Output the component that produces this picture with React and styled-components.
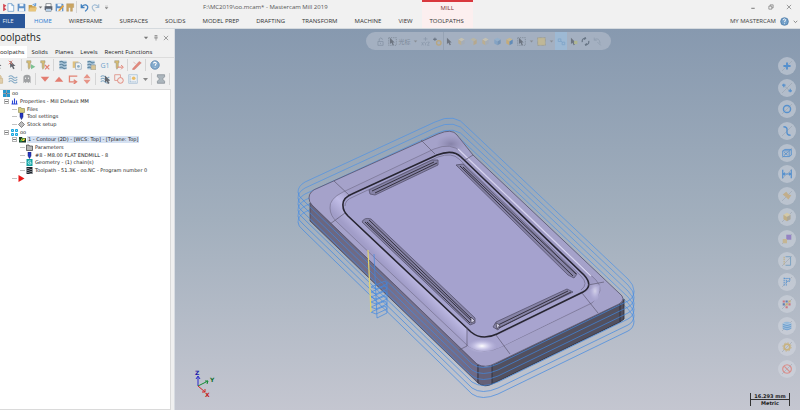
import React from 'react';
import styled, { createGlobalStyle, css } from 'styled-components';

const GlobalStyle = createGlobalStyle`
    * {
        box-sizing: border-box;
    }

    body {
        margin: 0;
        font-family: 'Open Sans', 'Noto Sans', sans-serif;
        font-size: 6px;
        color: #444;
        background: #f0f0f0;
    }

    button, a {
        font: inherit;
        color: inherit;
        text-decoration: none;
    }

    button {
        padding: 0;
        border: 0;
        background: none;
    }

    svg {
        display: block;
        flex-shrink: 0;
    }
`;

const Page = styled.div`
    min-height: 100vh;
    display: flex;
    flex-direction: column;
    overflow: hidden;
`;

const Header = styled.header`
    display: flex;
    background: #f1f1f1;
    border-bottom: 1px solid #d5dade;
`;

const HeaderColumn = styled.div`
    display: flex;
    flex-direction: column;
    flex-grow: ${props => props.grow ? 1 : 0};
`;

const HeaderRow = styled.div`
    display: flex;
    align-items: center;
    height: 14px;
    line-height: 14px;
    justify-content: ${props => props.end ? 'flex-end' : 'flex-start'};
    gap: ${props => props.gap || 0}px;
    padding-right: ${props => props.end ? 2 : 0}px;
`;

const QuickButton = styled.button`
    width: ${props => props.narrow ? 4 : 10}px;
    height: 12px;
    display: flex;
    align-items: center;
    justify-content: center;
`;

const Title = styled.h1`
    margin: 0 94px 0 auto;
    font-size: 6px;
    font-weight: 400;
    color: #555;
`;

const RibbonTab = styled.button`
    height: 14px;
    padding: 0 9px 0 8px;
    white-space: nowrap;
    color: ${props => props.active ? '#2b7cd3' : '#333'};
`;

const FileTab = styled.button`
    width: 25px;
    height: 14px;
    margin-right: 1px;
    padding-right: 9px;
    background: #2a579a;
    color: #e6ecf6;
`;

const Context = styled.div`
    display: flex;
    flex-direction: column;
    align-items: center;
    line-height: 12px;
    border-top: 2px solid #d9383e;
    background: #fcefef;
    color: #7b3434;
`;

const WindowButton = styled.button`
    width: 18px;
    height: 12px;
    display: flex;
    align-items: center;
    justify-content: center;
`;

const Main = styled.main`
    display: flex;
    flex: 1;
`;

const Panel = styled.aside`
    flex: 0 0 175px;
    display: flex;
    flex-direction: column;
    overflow: hidden;
    background: #f0f0f0;
    border-right: 1px solid #d8dce2;
`;

const PanelHeader = styled.div`
    display: flex;
    align-items: center;
    height: 17px;
    padding-right: 3px;

    h2 {
        flex: 1;
        margin: 0;
        font-size: 10px;
        font-weight: 400;
        line-height: 17px;
        color: #222;
    }
`;

const PanelButton = styled.button`
    width: 10px;
    height: 12px;
    display: flex;
    align-items: center;
    justify-content: center;
`;

const PanelTabs = styled.div`
    display: flex;
    height: 12px;
    border-bottom: 1px solid #dcdcdc;
`;

const PanelTab = styled.button`
    height: 12px;
    padding: 0 3px 0 4px;
    white-space: nowrap;
    color: #222;

    ${props => props.active && css`
        padding-left: 0;
        background: #fff;
    `}
`;

const ToolRow = styled.div`
    display: flex;
    align-items: center;
    gap: 2px;
    height: 14px;
    margin-left: -7px;
`;

const ToolButton = styled.button`
    flex: 0 0 ${props => props.narrow ? 8 : 12}px;
    height: 12px;
    display: flex;
    align-items: center;
    justify-content: center;
    font-size: 7px;
    color: #6da0cb;

    svg {
        opacity: .85;
    }
`;

const Divider = styled.span`
    flex: 0 0 2px;
    height: 12px;
    border-left: 1px solid #d5d5d5;
`;

const TreeBox = styled.div`
    flex: 1;
    margin: 3px 3px 0 0;
    border: 1px solid #dadada;
    border-left: 0;
    background: #fff;
`;

const Tree = styled.ul`
    display: grid;
    grid-template-rows: repeat(12, 1fr);
    height: 92px;
    margin: 0;
    padding: 0;
    list-style: none;
    font-family: 'DejaVu Sans', sans-serif;
    font-size: 5px;
    color: #222;
`;

const Node = styled.li`
    display: flex;
    align-items: center;
    gap: 1px;
    padding-left: ${props => props.level ? props.level * 8 - 4 : 3}px;
    white-space: nowrap;
`;

const Branch = styled.span`
    width: 5px;
    height: 5px;
    margin-right: ${props => props.leaf ? 0 : 1}px;
    display: flex;
    align-items: center;
    justify-content: center;
    border: ${props => props.leaf ? 0 : '1px solid #b5b5b5'};

    &::after {
        content: '';
        width: ${props => props.leaf ? 5 : 3}px;
        height: 1px;
        background: ${props => props.leaf ? '#c2c2c2' : '#777'};
    }
`;

const NodeLabel = styled.span`
    padding: 0 1px;
    line-height: 7px;
    background: ${props => props.selected ? '#d5e1f2' : 'transparent'};
`;

const Viewport = styled.section`
    position: relative;
    flex: 1;
    min-width: 0;
    background: linear-gradient(#8799af, #a2afbd 50%, #c4c6d0);
`;

const Scene = styled.svg`
    width: 100%;
    height: auto;
`;

const SelectionBar = styled.div`
    position: absolute;
    top: 3px;
    left: 191px;
    display: flex;
    align-items: center;
    height: 18px;
    padding: 0 8px;
    border-radius: 9px;
    background: #a4b0c1;
`;

const SelectionButton = styled.button`
    width: ${props => props.width || 12}px;
    height: 18px;
    display: flex;
    align-items: center;
    justify-content: center;
    font: 6px 'Open Sans', 'Noto Sans CJK SC', sans-serif;
    color: #7d8999;
    background: ${props => props.active ? '#9db9d4' : 'transparent'};
    border-left: ${props => props.divided ? '1px solid #96a3b4' : '0'};

    svg {
        opacity: .6;
    }
`;

const QuickMasks = styled.div`
    position: absolute;
    top: 28px;
    right: 4px;
    bottom: 32px;
    display: flex;
    flex-direction: column;
    justify-content: space-between;
`;

const MaskButton = styled.button`
    width: 18px;
    height: 18px;
    display: flex;
    align-items: center;
    justify-content: center;
    border-radius: 50%;
    background: rgba(214, 218, 226, .5);

    svg {
        opacity: .8;
    }
`;

const Scale = styled.div`
    position: absolute;
    right: 10px;
    bottom: 4px;
    width: 40px;
    font: bold 5px 'DejaVu Sans', sans-serif;
    line-height: 6px;
    text-align: center;
    color: #222;
    border: solid #333;
    border-width: 0 1px;

    div:first-child {
        border-bottom: 1px solid #333;
    }
`;

const BLUE = '#3f86cf';
const RED = '#e0705f';

const cursor = <path d='M3 1v10l2.5-2 1.7 4 2-1-1.8-3.6h3z' fill='#4a4f57' />;
const cube = (top, left, right) => <>
    <path d='M2 4l5-3 5 3-5 3z' fill={top} />
    <path d='M2 4v6l5 3V7z' fill={left} />
    <path d='M12 4v6l-5 3V7z' fill={right} />
</>;
const waves = <path d='M1 4q3-3 6 0t6 0M1 7.5q3-3 6 0t6 0M1 11q3-3 6 0t6 0' fill='none' stroke='#719dbd' strokeWidth='1.5' />;
const stripes = <>
    <path d='M2 1h10v12H2z' fill='#9cbdd5' />
    <path d='M2 3q3-2 5 0t5 0M2 7q3-2 5 0t5 0M2 11q3-2 5 0t5 0' fill='none' stroke='#477594' strokeWidth='1.6' />
</>;
const tool = <path d='M1 1h6v3H6v6l-2 3-1-3V4H1z' fill='#d5b65e' stroke='#77745f' strokeWidth='.6' />;
const floppy = <>
    <path d='M1 1h11l1 1v11H1z' fill='#5c8fc7' />
    <path d='M4 1h6v4H4zM3 8h8v5H3z' fill='#eef3f8' />
</>;

// every glyph is drawn in a 14 x 14 box
const glyphs = {
    logo: <path d='M8 1l5 3-3 3 3 3-5 3z' fill='#d34a55' />,
    file: <path d='M3 1h6l3 3v9H3zM9 1v3h3' fill='#f7fbff' stroke='#6f9fce' strokeWidth='1.2' />,
    save: floppy,
    folder: <>
        <path d='M1 3h5l1 2h5v8H1z' fill='#c69c4a' />
        <path d='M3 7h11l-2 6H1z' fill='#e9c57a' />
        <path d='M7 3q3-3 5 0M12 0v4H9' fill='none' stroke={BLUE} strokeWidth='1.2' />
    </>,
    print: <>
        <path d='M3 1h8v5H3zM3 9h8v4H3z' fill='#fff' stroke='#5b6168' />
        <path d='M1 5h12v6H1z' fill='#5d6470' />
        <path d='M3 9h8v4H3z' fill='#b9d1e8' />
    </>,
    saveAs: <>{floppy}<path d='M6 10l6-7 2 2-6 7-3 1z' fill='#e5a23d' /></>,
    zip: <path d='M1 1h11v6h-2v6H7V7H4v6H1z' fill='#caa562' stroke='#a78650' strokeWidth='.5' />,
    undo: <path d='M2 2v5h5M2 7q3-5 7-4 5 2 2 7l-3 3' fill='none' stroke='#3f7fbf' strokeWidth='2' />,
    redo: <path d='M12 2v5H7M12 7Q9 2 5 3q-5 2-2 7l3 3' fill='none' stroke='#a3bdd5' strokeWidth='1.8' />,
    caret: <path d='M2 4h10l-5 6z' fill='#777' />,
    chevron: <path d='M2 5l5 5 5-5' fill='none' stroke='#555' strokeWidth='1.8' />,
    customize: <path d='M3 3h8M3 7h8l-4 4z' fill='#777' stroke='#777' />,
    minimize: <path d='M3 10h8' stroke='#555' strokeWidth='1.8' />,
    restore: <path d='M2 5h7v7H2zM5 5V2h7v7H9' fill='none' stroke='#666' strokeWidth='1.4' />,
    close: <path d='M2 2l10 10M12 2L2 12' stroke='#666' strokeWidth='1.4' />,
    pin: <path d='M4 1h6M5 1v6M9 1v6M3 7h8M7 7v6' fill='none' stroke='#666' strokeWidth='1.3' />,
    help: <>
        <circle cx='7' cy='7' r='6' fill='#729fc8' stroke='#3d6f9f' />
        <path d='M5 5q0-2 2-2 3 1 1 3l-1 2M7 10v1' fill='none' stroke='#fff' strokeWidth='1.5' />
    </>,
    cursor,
    cursorX: <>{cursor}<path d='M1 1l5 5M6 1L1 6' stroke={RED} strokeWidth='1.4' /></>,
    toolPlay: <>{tool}<path d='M7 6l6 3.5L7 13z' fill='#68ba83' /></>,
    toolX: <>{tool}<path d='M7 7l6 6M13 7l-6 6' stroke={RED} strokeWidth='1.6' /></>,
    toolArrow: <>{tool}<path d='M5 10h7M10 7l3 3-3 3' fill='none' stroke={RED} strokeWidth='1.4' /></>,
    stripes,
    stripesSave: <>{stripes}<path d='M7 7h7v7H7z' fill='#d4bd84' stroke='#8b98a4' /></>,
    docs: <>
        <path d='M1 2h8v9H1z' fill='#dcb86c' />
        <path d='M5 4h6l2 2v7H5z' fill='#f6f8fa' stroke='#8099ad' />
        <circle cx='9' cy='9' r='2' fill='#79a2bd' />
    </>,
    pen: <path d='M1 12L10 2l3 2-9 9-3 1zM2 3l3 2' fill='#df7668' stroke='#c7665c' strokeWidth='.6' />,
    lock: <path d='M2 6h10v7H2zM4 6V3q3-4 6 0v3' fill='#dec9a1' stroke='#c5ab78' />,
    waves,
    ghost: <>
        <path d='M2 13V5q0-4 5-4t5 4v8l-2-2-1 2-2-2-2 2-1-2z' fill='#919496' />
        <path d='M5 5v2M9 5v2' stroke='#eee' strokeWidth='1.4' />
    </>,
    down: <path d='M1 4h12l-6 7z' fill='#e16a5b' />,
    up: <path d='M1 11h12L7 4z' fill='#e16a5b' />,
    loop: <path d='M13 3H2v8h9M8 8l4 3-4 3' fill='none' stroke={RED} strokeWidth='1.8' />,
    upDown: <path d='M7 0l5 6H2zM7 14l5-6H2z' fill='#e58677' />,
    wavesCursor: <>{waves}<g transform='translate(4 1)'>{cursor}</g></>,
    shapes: <>
        <path d='M1 1h8v8H1z' fill='none' stroke='#de8b7e' strokeWidth='1.3' />
        <circle cx='9' cy='9' r='4' fill='#f5e9e6' stroke='#dd7466' strokeWidth='1.3' />
    </>,
    grid: <>
        <path d='M1 1h12v12H1z' fill='#edf1f5' stroke='#8fb1cf' />
        <path d='M3 3v8M3 11h8' stroke='#7ca5c8' strokeDasharray='2 1' />
        <circle cx='8' cy='6' r='2.5' fill='#e7b34e' />
    </>,
    post: <path d='M2 1h10v3L9 7l3 3v3H2v-3l3-3-3-3z' fill='#a0abb3' stroke='#6e7982' />,
    group: <>
        <path d='M0 0h6v6H0zM8 0h6v6H8zM0 8h6v6H0zM8 8h6v6H8z' fill='#2598cf' />
        <path d='M0 7h14M7 0v14' stroke='#1c3b57' />
    </>,
    groupLight: <path d='M1 1h4v4H1zM9 1h4v4H9zM1 9h4v4H1zM9 9h4v4H9z' fill='#8fe0f7' stroke='#19a6df' strokeWidth='2' />,
    properties: <path d='M3 5v7M7 1v11M11 5v7M1 12h12' stroke='#2946d6' strokeWidth='2.2' />,
    files: <path d='M1 3h5l1 2h6v8H1z' fill='#d3ca7a' stroke='#77733f' />,
    endmill: <path d='M4 0h6v8l-3 5-3-5z' fill='#2436c4' stroke='#141e66' />,
    stock: <path d='M7 1l6 6-6 6-6-6z' fill='#bdbdbd' stroke='#555' strokeWidth='1.3' />,
    contour: <>
        <path d='M0 2h6l1 2h7v9H0z' fill='#173c2a' />
        <path d='M5 5h8l-3 5H3z' fill='#f1cf3c' />
        <path d='M1 7l3 4 5-7' fill='none' stroke='#27b04a' strokeWidth='2' />
    </>,
    parameters: <path d='M1 2h5l1 2h6v9H1z' fill='#b6b6b6' stroke='#333' strokeWidth='1.3' />,
    geometry: <>
        <path d='M1 0h12v14H1z' fill='#16a3a3' />
        <path d='M10 4Q4 2 4 7t6 3V7H7' fill='none' stroke='#d9ffff' strokeWidth='1.4' />
    </>,
    toolpath: <>
        <path d='M1 0h12v14H1z' fill='#20252c' />
        <path d='M1 4q3-3 6 0t6 0M1 8q3-3 6 0t6 0M1 12q3-3 6 0t6 0' fill='none' stroke='#d6dce2' />
    </>,
    insert: <path d='M1 0l12 7-12 7z' fill='#e81717' />,
    unlock: <path d='M3 7h8v6H3zM5 7V3q2-3 5 0v1M7 9v2' fill='none' stroke='#758395' strokeWidth='1.3' />,
    cursorBox: <><path d='M1 1h12v12H1z' fill='none' stroke='#565f6b' strokeDasharray='2 1.5' />{cursor}</>,
    xyz: <path d='M7 0v6M4 3h6M1 8l3 5M4 8l-3 5M5 8l2 2 2-2M7 10v3M10 8h3l-3 5h3' fill='none' stroke='#748397' />,
    star: <>
        <circle cx='9' cy='9' r='3.5' fill='none' stroke='#c8a052' strokeWidth='2' />
        <path d='M3 1v5M0 3.5h6' stroke='#333c48' strokeWidth='1.4' />
    </>,
    cubeTan: cube('#d8cba9', '#c9ad74', '#a7acb1'),
    cubeGray: cube('#c5b991', '#a9b3bd', '#c3a46c'),
    cubeBlue: cube('#8bb0d3', '#6f9bc6', '#5783b0'),
    cubeMixed: cube('#d6ba78', '#dba94a', '#3775b3'),
    pattern: <path d='M1 1h12v12H1z' fill='#d1bd7c' stroke='#776c4b' strokeDasharray='1 1' />,
    chain: <path d='M2 3h4v4H2zM8 8h4v4H8zM6 6l3 3' fill='none' stroke='#6e9ac3' strokeWidth='1.4' />,
    cursorPair: <>{cursor}<path d='M8 6h5v5H8z' fill='#b8bd70' /></>,
    rotate: <path d='M2 8Q1 2 7 2l-1-2M7 2L5 4M12 6q1 6-5 6l1 2M7 12l2-2' fill='none' stroke='#3e4d5c' strokeWidth='1.8' />,
    arc: <path d='M2 4q8-4 9 6M2 1v4h4M7 8l5 5' fill='none' stroke='#8797a9' strokeWidth='1.5' />,
    plus: <path d='M7 2v10M2 7h10' stroke={BLUE} strokeWidth='2.6' />,
    line: <>
        <path d='M2 3l10 9' stroke='#9aa8b5' strokeWidth='1.4' />
        <path d='M0 3h5M2.5 1v5M9 11h5M11.5 8v5' stroke={BLUE} strokeWidth='1.7' />
    </>,
    circle: <circle cx='7' cy='7' r='5' fill='none' stroke={BLUE} strokeWidth='2' />,
    spline: <path d='M2 1q6 0 5 6t5 6' fill='none' stroke={BLUE} strokeWidth='2' />,
    wire: <path d='M1 4h9v8H1zM1 4l3-2h9l-3 2M13 2v8l-3 2M3 6l5 4M8 6l-5 4' fill='none' stroke={BLUE} strokeWidth='1.3' />,
    dimension: <path d='M1 1v12M13 1v12M2 7h10M4 5L2 7l2 2M10 5l2 2-2 2' fill='none' stroke={BLUE} strokeWidth='1.7' />,
    surface: <path d='M1 5l5-4 3 4 4 1-4 6-4-4z' fill='#c4aa7b' />,
    solid: cube('#dacb9e', '#c2aa74', '#aaa08a'),
    planes: <><path d='M6 1h7v7H6z' fill='#8a73c0' /><path d='M1 7h6v6H1z' fill='#c7b386' /></>,
    bracket: <>
        <path d='M5 1h7v12H5' fill='none' stroke='#6d9abf' strokeWidth='1.4' />
        <path d='M3 1v12' stroke='#c2aa74' strokeWidth='1.6' strokeDasharray='2 1' />
    </>,
    level: <path d='M3 1v12M3 2h8v4H6M6 4v8' fill='none' stroke={BLUE} strokeWidth='1.4' strokeDasharray='2 1' />,
    colors: <>
        <path d='M1 2h3v3H1zM9 6h3v3H9zM5 10h3v3H5z' fill='#d0626f' />
        <path d='M5 2h3v3H5zM1 6h3v3H1z' fill='#4e6aa5' />
        <path d='M9 2h3v3H9zM5 6h3v3H5z' fill='#c9a75a' />
    </>,
    database: <>
        <path d='M1 3v8q6 4 12 0V3z' fill='#5c98d0' />
        <path d='M1 3q6-4 12 0-6 4-12 0' fill='#8bb6dc' />
        <path d='M1 3q6 4 12 0M1 6q6 4 12 0M1 9q6 4 12 0' fill='none' stroke='#d2deea' strokeWidth='.7' />
    </>,
    gear: <>
        <circle cx='7' cy='7' r='4' fill='none' stroke='#c8ad6e' strokeWidth='2.5' />
        <circle cx='7' cy='7' r='6' fill='none' stroke='#c8ad6e' strokeDasharray='2 2.7' />
    </>,
    forbidden: <path d='M3 3l8 8M7 1a6 6 0 1 0 .1 0z' fill='none' stroke='#df8079' strokeWidth='1.6' />,
};

const Icon = ({ name, size = 9, slash }) => <svg width={size} height={size} viewBox='0 0 14 14' aria-hidden='true'>
    {slash && <path d='M0 14L14 0' stroke='#929da9' strokeWidth='.8' />}
    {glyphs[name]}
</svg>;

const quickAccess = ['logo', 'file', 'save', 'folder', 'caret', 'print', 'saveAs', 'zip', '|', 'undo', 'redo', 'customize'];
const ribbonTabs = ['HOME', 'WIREFRAME', 'SURFACES', 'SOLIDS', 'MODEL PREP', 'DRAFTING', 'TRANSFORM', 'MACHINE', 'VIEW'];
const panelTabs = ['oolpaths', 'Solids', 'Planes', 'Levels', 'Recent Functions'];
const toolRows = [
    ['cursor', 'cursorX', '|', 'toolPlay', 'toolX', '|', 'stripes', 'docs', 'stripesSave', 'G1', 'toolArrow', '|', 'pen', '|', 'help'],
    ['lock', 'waves', 'ghost', '|', 'down', 'up', 'loop', 'upDown', '|', 'wavesCursor', 'shapes', 'grid', 'caret', '|', 'post', '|'],
];
const tree = [
    { level: 0, icon: 'group', label: 'oo' },
    { level: 1, icon: 'properties', label: 'Properties - Mill Default MM' },
    { level: 2, icon: 'files', label: 'Files', leaf: true },
    { level: 2, icon: 'endmill', label: 'Tool settings', leaf: true },
    { level: 2, icon: 'stock', label: 'Stock setup', leaf: true },
    { level: 1, icon: 'groupLight', label: 'oo' },
    { level: 2, icon: 'contour', label: '1 - Contour (2D) - [WCS: Top] - [Tplane: Top]', selected: true },
    { level: 3, icon: 'parameters', label: 'Parameters', leaf: true },
    { level: 3, icon: 'endmill', label: '#8 - M8.00 FLAT ENDMILL - 8', leaf: true },
    { level: 3, icon: 'geometry', label: 'Geometry - (1) chain(s)', leaf: true },
    { level: 3, icon: 'toolpath', label: 'Toolpath - 51.3K - oo.NC - Program number 0', leaf: true },
    { level: 2, icon: 'insert', label: '', leaf: true },
];
const selection = [
    { icon: 'unlock' },
    { icon: 'cursorBox' },
    { text: '光标', width: 13 },
    { icon: 'caret', width: 8 },
    { icon: 'xyz' },
    { icon: 'star' },
    { icon: 'cursor', divided: true },
    { icon: 'cubeTan' },
    { icon: 'cubeGray' },
    { icon: 'cubeTan' },
    { icon: 'cubeBlue' },
    { icon: 'cubeMixed' },
    { icon: 'cursorBox' },
    { icon: 'caret', width: 8 },
    { icon: 'pattern' },
    { icon: 'caret', width: 8 },
    { icon: 'chain', active: true },
    { icon: 'cursorPair' },
    { icon: 'rotate' },
    { icon: 'arc' },
];
const masks = ['plus', 'line', 'circle', 'spline', 'wire', 'dimension', 'surface', 'solid', 'planes', 'bracket', 'level', 'colors', 'database', 'gear', 'forbidden'];

const passes = [0, 6, 12, 18, 24, 30];
const backPass = 'M298 192Q298 186 305 182L435 122Q455 112 467 127L628 279Q634 285 634 291';
const frontPass = 'M298 192Q298 196 303 200L472 364Q482 371 498 364L628 301Q634 298 634 291';
const facePath = 'M309 198Q309 191 318 188L438 134Q452 128 457 135L473 155L619 293Q627 299 619 304L496 363Q485 369 477 364L312 205Q309 202 309 198z';

const Slot = ({ outer, inner }) => <g strokeLinejoin='round'>
    <path d={outer} fill='#8683a7' stroke='#55526c' strokeWidth='.8' />
    <path d={inner} fill='none' stroke='#34313f' />
</g>;

const Model = () => <Scene viewBox='175 29 625 381' role='img' aria-label='Contour toolpath on part'>
    <defs>
        <linearGradient id='side' x1='0' y1='0' x2='1' y2='1'>
            <stop offset='0' stopColor='#68647d' />
            <stop offset='.6' stopColor='#77728f' />
            <stop offset='1' stopColor='#6e6985' />
        </linearGradient>
        <linearGradient id='fillet' gradientUnits='userSpaceOnUse' x1='395' y1='275' x2='414' y2='256'>
            <stop offset='0' stopColor='#a19dc8' />
            <stop offset='.5' stopColor='#c0bce6' />
            <stop offset='1' stopColor='#a09cc5' />
        </linearGradient>
        <radialGradient id='shine'>
            <stop offset='0' stopColor='#fff' />
            <stop offset='.4' stopColor='#dbd8f3' stopOpacity='.8' />
            <stop offset='1' stopColor='#bab7df' stopOpacity='0' />
        </radialGradient>
        <radialGradient id='dusk'>
            <stop offset='0' stopColor='#79759a' stopOpacity='.7' />
            <stop offset='1' stopColor='#8e8ab0' stopOpacity='0' />
        </radialGradient>
    </defs>

    <g fill='none' stroke='#4d92e6' strokeWidth='.7'>
        {passes.map(y => <path key={y} d={backPass} transform={`translate(0 ${y})`} />)}
    </g>

    <path d='M310 203L478 365V383L310 221z' fill='url(#side)' stroke='#494659' strokeWidth='.8' />
    <path d='M478 364L486 367L492 365L492 384Q485 388 478 383z' fill='#646078' />
    <path d='M492 365L621 303L624 299V319L620 322L492 384z' fill='#52505f' />
    <path d='M478 365v18Q485 388 492 384L620 322L624 319V299M492 365v19M620 304v18' fill='none' stroke='#292833' strokeWidth='.8' />
    <path d={facePath} fill='#a5a2ca' stroke='#55526c' strokeWidth='.8' />
    <ellipse cx='451' cy='144' rx='15' ry='9' fill='url(#dusk)' />

    <path
        d='M330 208Q329 199 343 192L434 149Q451 142 461 152L596 280Q606 290 592 303L503 346Q483 356 468 346L338 223Q330 216 330 208z'
        fill='url(#fillet)' stroke='#75718f' strokeWidth='.7'
    />
    <path d='M467 327L485 338L505 332L583 293L600 285L598 299L503 346Q483 356 468 346z' fill='#a8a4cf' />
    <ellipse cx='482' cy='346' rx='15' ry='7' fill='url(#shine)' />
    <ellipse cx='595' cy='291' rx='6' ry='10' fill='url(#shine)' opacity='.5' />
    <path d='M458 149L591 276' stroke='#d6d3f0' strokeWidth='1.4' />

    <path
        d='M343 206Q342 198 352 194L437 155Q453 149 461 157L584 275Q594 286 583 292L497 334Q482 341 471 332L348 216Q343 211 343 206z'
        fill='#a5a2ce' stroke='#272531' strokeWidth='1.6'
    />
    <path d='M345 206Q345 200 353 197L438 157Q452 152 459 159L581 276Q589 284 581 290' fill='none' stroke='#777392' strokeWidth='.8' />

    <Slot outer='M369 190L432 160L438 160L438 165L375 195L370 194z' inner='M372 191L434 162M375 193L437 163' />
    <Slot outer='M362 222Q364 217 371 219L475 318V323L470 325z' inner='M365 222L470 323M369 220L472 319M367 222L473 322' />
    <Slot outer='M456 165L463 164L577 274L574 278L568 275z' inner='M460 166L573 276M463 167L576 274' />
    <Slot outer='M493 327L496 322L567 289L573 292L500 327L498 330z' inner='M498 325L568 291M499 328L571 292' />
    <path d='M471 317v6l4-2zM496 323l4 2-3 4z' fill='#d3d0e5' stroke='#403d4d' strokeWidth='.7' />

    <g fill='none' stroke='#5e5a73' strokeWidth='.7'>
        <path d='M334 181L349 195M421 140L435 154M330 224L345 213M473 155L465 160M467 327v19L459 350M496 335L510 354M582 293L598 313M588 285L604 282' />
    </g>

    <g fill='none' stroke='#3f88e2' strokeWidth='.7'>
        {passes.map(y => <path key={y} d={frontPass} transform={`translate(0 ${y})`} />)}
        <path d='M374 254L377 318L387 313V282' />
        {[282, 287, 292, 297, 302, 307].map(y => <path key={y} d={`M371 ${y + 5}L385 ${y - 1}L387 ${y + 2}L376 ${y + 7}z`} />)}
    </g>
    <path d='M368 250L371 312' stroke='#e0d36c' strokeWidth='1.2' />

    <g fontFamily='DejaVu Sans, sans-serif' fontSize='6' fontWeight='bold'>
        <path d='M198 386v-9M196 379l2-3 2 3' fill='none' stroke='#2727cc' />
        <path d='M198 386l10-5M205 381h3l-1 3' fill='none' stroke='#168b35' />
        <path d='M198 386l7 6M205 389v3h-3' fill='none' stroke='#d32424' />
        <text x='195' y='375' fill='#2020a8'>Z</text>
        <text x='210' y='382' fill='#12702a'>Y</text>
        <text x='205' y='397' fill='#c11c1c'>X</text>
    </g>
</Scene>;

const App = () => <Page>
    <GlobalStyle />
    <Header>
        <HeaderColumn>
            <HeaderRow gap={1}>
                {quickAccess.map((name, i) => name === '|'
                    ? <Divider key={i} />
                    : <QuickButton key={i} narrow={['caret', 'logo'].includes(name) ? 1 : undefined} aria-label={name}>
                        <Icon name={name} size={['caret', 'customize'].includes(name) ? 5 : 9} />
                    </QuickButton>
                )}
                <Title>F:\MC2019\oo.mcam* - Mastercam Mill 2019</Title>
            </HeaderRow>
            <HeaderRow>
                <FileTab>FILE</FileTab>
                {ribbonTabs.map((tab, i) => <RibbonTab key={tab} active={i === 0 ? 1 : undefined}>{tab}</RibbonTab>)}
            </HeaderRow>
        </HeaderColumn>
        <Context>
            <span>MILL</span>
            <RibbonTab>TOOLPATHS</RibbonTab>
        </Context>
        <HeaderColumn grow={1}>
            <HeaderRow end={1}>
                <WindowButton aria-label='Minimize'><Icon name='minimize' size={6} /></WindowButton>
                <WindowButton aria-label='Restore'><Icon name='restore' size={6} /></WindowButton>
                <WindowButton aria-label='Close'><Icon name='close' size={6} /></WindowButton>
            </HeaderRow>
            <HeaderRow end={1} gap={4}>
                <a href='#account'>MY MASTERCAM</a>
                <button aria-label='Help'><Icon name='help' size={9} /></button>
                <button aria-label='Collapse ribbon'><Icon name='chevron' size={5} /></button>
            </HeaderRow>
        </HeaderColumn>
    </Header>
    <Main>
        <Panel>
            <PanelHeader>
                <h2>oolpaths</h2>
                <PanelButton aria-label='Options'><Icon name='caret' size={6} /></PanelButton>
                <PanelButton aria-label='Pin'><Icon name='pin' size={6} /></PanelButton>
                <PanelButton aria-label='Close panel'><Icon name='close' size={6} /></PanelButton>
            </PanelHeader>
            <PanelTabs>
                {panelTabs.map((tab, i) => <PanelTab key={tab} active={i === 0 ? 1 : undefined}>{tab}</PanelTab>)}
            </PanelTabs>
            {toolRows.map((row, r) => <ToolRow key={r}>
                {row.map((name, i) => name === '|'
                    ? <Divider key={i} />
                    : <ToolButton key={i} narrow={name === 'caret' ? 1 : undefined} aria-label={name}>
                        {name === 'G1' ? 'G1' : <Icon name={name} size={name === 'caret' ? 7 : 10} />}
                    </ToolButton>
                )}
            </ToolRow>)}
            <TreeBox>
                <Tree>
                    {tree.map((node, i) => <Node key={i} level={node.level}>
                        {node.level > 0 && <Branch leaf={node.leaf ? 1 : undefined} />}
                        <Icon name={node.icon} size={7} />
                        <NodeLabel selected={node.selected ? 1 : undefined}>{node.label}</NodeLabel>
                    </Node>)}
                </Tree>
            </TreeBox>
        </Panel>
        <Viewport>
            <Model />
            <SelectionBar>
                {selection.map((item, i) => <SelectionButton
                    key={i}
                    width={item.width}
                    active={item.active ? 1 : undefined}
                    divided={item.divided ? 1 : undefined}
                    aria-label={item.text || item.icon}
                >
                    {item.text || <Icon name={item.icon} size={item.icon === 'caret' ? 5 : 9} />}
                </SelectionButton>)}
            </SelectionBar>
            <QuickMasks>
                {masks.map(name => <MaskButton key={name} aria-label={name}><Icon name={name} size={10} slash /></MaskButton>)}
            </QuickMasks>
            <Scale>
                <div>16.293 mm</div>
                <div>Metric</div>
            </Scale>
        </Viewport>
    </Main>
</Page>;

export default App;
